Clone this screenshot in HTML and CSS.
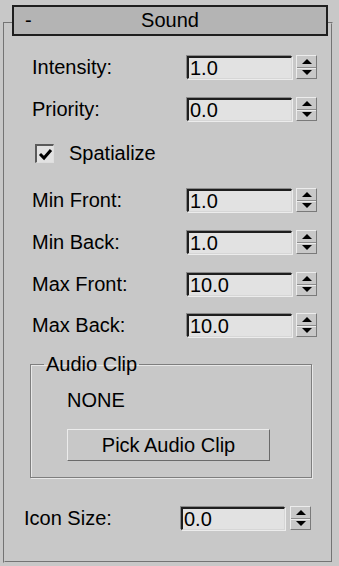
FILE: index.html
```html
<!DOCTYPE html>
<html lang="en">
  <head>
    <meta charset="UTF-8" />
    <title>Sound</title>
    <link rel="stylesheet" href="styles.css">
  </head>
  <body>

    <div class="rollout-title">
      <span class="toggle">-</span>
      <span class="title-text">Sound</span>
    </div>

    <div class="rollout">

      <div class="row">
        <span class="label">Intensity:</span>
        <div class="field">1.0</div>
        <div class="spin"><span class="up"></span><span class="down"></span></div>
      </div>

      <div class="row gap-19">
        <span class="label">Priority:</span>
        <div class="field">0.0</div>
        <div class="spin"><span class="up"></span><span class="down"></span></div>
      </div>

      <div class="check-row">
        <span class="checkbox">
          <svg width="15" height="15" viewBox="0 0 15 15"><path d="M2 7 L6 11 L13 3" fill="none" stroke="#000" stroke-width="3"/></svg>
        </span>
        <span>Spatialize</span>
      </div>

      <div class="row gap-25">
        <span class="label">Min Front:</span>
        <div class="field">1.0</div>
        <div class="spin"><span class="up"></span><span class="down"></span></div>
      </div>

      <div class="row gap-18">
        <span class="label">Min Back:</span>
        <div class="field">1.0</div>
        <div class="spin"><span class="up"></span><span class="down"></span></div>
      </div>

      <div class="row gap-19">
        <span class="label">Max Front:</span>
        <div class="field">10.0</div>
        <div class="spin"><span class="up"></span><span class="down"></span></div>
      </div>

      <div class="row gap-17">
        <span class="label">Max Back:</span>
        <div class="field">10.0</div>
        <div class="spin"><span class="up"></span><span class="down"></span></div>
      </div>

      <fieldset class="group">
        <legend>Audio Clip</legend>
        <div class="clip-name">NONE</div>
        <button class="pick-btn">Pick Audio Clip</button>
      </fieldset>

      <div class="row icon-row">
        <span class="label">Icon Size:</span>
        <div class="field">0.0</div>
        <div class="spin"><span class="up"></span><span class="down"></span></div>
      </div>

    </div>

  </body>
</html>
```

FILE: styles.css
```css
body {
    margin: 0;
    background: #c8c8c8;
    font-family: "Liberation Sans", Arial, sans-serif;
    font-size: 20px;
    color: #000;
  }

.rollout-title {
    position: relative;
    z-index: 1;
    margin: 5px 11px 0 12px;
    height: 27px;
    background: #b4b4b4;
    border: 2px solid #1e1e1e;
    display: flex;
    align-items: center;
  }

.toggle {
    width: 20px;
    margin-left: 11px;
  }

.title-text {
    flex: 1;
    text-align: center;
    margin-right: 31px;
  }

.rollout {
    margin: -14px 6px 0 3px;
    border: 2px groove #c8c8c8;
    padding: 31px 0 31px 27px;
    display: flex;
    flex-direction: column;
  }

.row {
    display: flex;
    align-items: center;
    height: 24px;
  }

.gap-17 { margin-top: 17px; }
.gap-18 { margin-top: 18px; }
.gap-19 { margin-top: 18px; }
.gap-25 { margin-top: 25px; }

.label {
    width: 155px;
  }

.field {
    box-sizing: border-box;
    width: 105px;
    height: 23px;
    background: #e2e2e2;
    border-style: solid;
    border-width: 2px 1px 1px 2px;
    border-color: #1e1e1e #d6d6d6 #d6d6d6 #1e1e1e;
    box-shadow: -1px -1px 0 #8a8a8a, 1px 1px 0 #ececec;
    padding-left: 1px;
    line-height: 20px;
  }

.spin {
    box-sizing: border-box;
    width: 21px;
    height: 24px;
    margin-left: 4px;
    border-style: solid;
    border-width: 1px;
    border-color: #ececec #7a7a7a #7a7a7a #ececec;
    display: flex;
    flex-direction: column;
  }

.spin span {
    flex: 1;
    display: flex;
    align-items: center;
    justify-content: center;
  }

.spin .up {
    border-bottom: 1px solid #8c8c8c;
    box-shadow: 0 1px 0 #ececec;
  }

.spin .up::after,
.spin .down::after {
    content: "";
    border-left: 5px solid transparent;
    border-right: 5px solid transparent;
  }

.spin .up::after {
    border-bottom: 5px solid #000;
  }

.spin .down::after {
    border-top: 5px solid #000;
  }

.check-row {
    display: flex;
    align-items: center;
    margin: 23px 0 0 3px;
    height: 19px;
  }

.checkbox {
    box-sizing: border-box;
    width: 19px;
    height: 19px;
    margin-right: 15px;
    background: #e2e2e2;
    border-style: solid;
    border-width: 2px 1px 1px 2px;
    border-color: #5a5a5a #dedede #dedede #5a5a5a;
    display: flex;
    align-items: center;
    justify-content: center;
  }

.group {
    margin: 16px 19px 0 -2px;
    padding: 0 0 16px 36px;
    border: 1px solid #7e7e7e;
    box-shadow: inset 1px 1px 0 #e8e8e8, 1px 1px 0 #e8e8e8;
  }

.group legend {
    margin-left: -23px;
    padding: 0 2px;
    line-height: 23px;
  }

.clip-name {
    margin-top: 13px;
    line-height: 23px;
  }

.pick-btn {
    display: block;
    margin-top: 17px;
    width: 203px;
    height: 32px;
    background: #c8c8c8;
    font-family: "Liberation Sans", Arial, sans-serif;
    font-size: 20px;
    color: #000;
    border-style: solid;
    border-width: 1px;
    border-color: #ececec #6a6a6a #6a6a6a #ececec;
    padding: 0;
  }

.icon-row {
    margin: 28px 0 0 -8px;
  }

.icon-row .label {
    width: 157px;
  }

.icon-row .field {
    width: 104px;
  }

.icon-row .spin {
    margin-left: 5px;
  }
```
